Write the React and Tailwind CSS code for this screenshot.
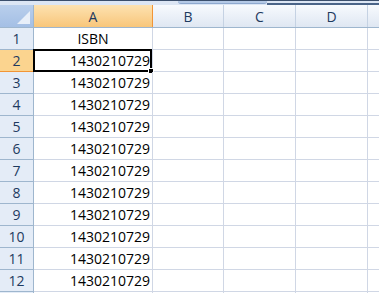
const cols = [
  { key: 'B', w: 'w-[71px]' },
  { key: 'C', w: 'w-[72px]' },
  { key: 'D', w: 'w-[72px]' },
]

const rows = [
  { n: 1, a: 'ISBN' },
  ...Array.from({ length: 11 }, (_, i) => ({ n: i + 2, a: '1430210729' })),
  { n: 13, a: '' },
]

const font = { fontFamily: '"Open Sans", "Liberation Sans", sans-serif' }

export default function App() {
  return (
    <div className="w-[379px] h-[293px] overflow-hidden bg-white relative" style={font}>
      {/* bottom of formula bar */}
      <div className="h-[5px] flex bg-[#dce6f4] border-t border-[#3b4f6c]">
        <div className="w-[178px]" />
        <div className="w-[89px] h-[3px] bg-[#b4c9e6] border-b border-[#8ea9cf] rounded-b-[4px]" />
        <div className="flex-1 h-[4px] border-b-2 border-[#4a6488]" />
      </div>

      {/* column headers */}
      <div className="flex h-[23px] border-b border-[#9eb6ce] text-[14px] text-[#1e3a5f]">
        <div className="w-[34px] relative border-r border-[#9eb6ce] bg-gradient-to-b from-[#b9cfec] to-[#a4bfe5]">
          <div className="absolute right-[3px] bottom-[3px] w-0 h-0 border-l-[13px] border-l-transparent border-b-[13px] border-b-[#e8eff9]" />
        </div>
        <div className="w-[119px] flex items-center justify-center border-r border-[#f29536] bg-gradient-to-b from-[#fde2b0] to-[#f8c67a]">
          A
        </div>
        {cols.map(c => (
          <div key={c.key} className={`${c.w} flex items-center justify-center border-r border-[#c5d2e3] bg-gradient-to-b from-[#f7fafd] to-[#dfe7f2]`}>
            {c.key}
          </div>
        ))}
        <div className="flex-1 bg-gradient-to-b from-[#f7fafd] to-[#dfe7f2]" />
      </div>

      {/* rows */}
      {rows.map(r => {
        const sel = r.n === 2
        return (
          <div key={r.n} className="flex h-[22px] text-[14px]">
            <div className={`w-[34px] flex items-center justify-center border-r border-b ${sel ? 'bg-[#fbd48f] border-[#f29536]' : 'bg-[#e4ecf7] border-[#9eb6ce]'} text-[#1e3a5f]`}>
              {r.n < 13 ? r.n : ''}
            </div>
            <div className={`w-[119px] flex items-center border-r border-b border-[#d0d7e5] text-black ${r.n === 1 ? 'justify-center' : 'justify-end pr-[2px]'} relative`}>
              {r.a}
              {sel && (
                <div className="absolute left-[-1px] top-[-1px] w-[119px] h-[23px] border-2 border-black">
                  <div className="absolute right-[-4px] bottom-[-4px] w-[6px] h-[6px] bg-black border border-white" />
                </div>
              )}
            </div>
            {cols.map(c => (
              <div key={c.key} className={`${c.w} border-r border-b border-[#d0d7e5]`} />
            ))}
            <div className="flex-1 border-b border-[#d0d7e5]" />
          </div>
        )
      })}
    </div>
  )
}
